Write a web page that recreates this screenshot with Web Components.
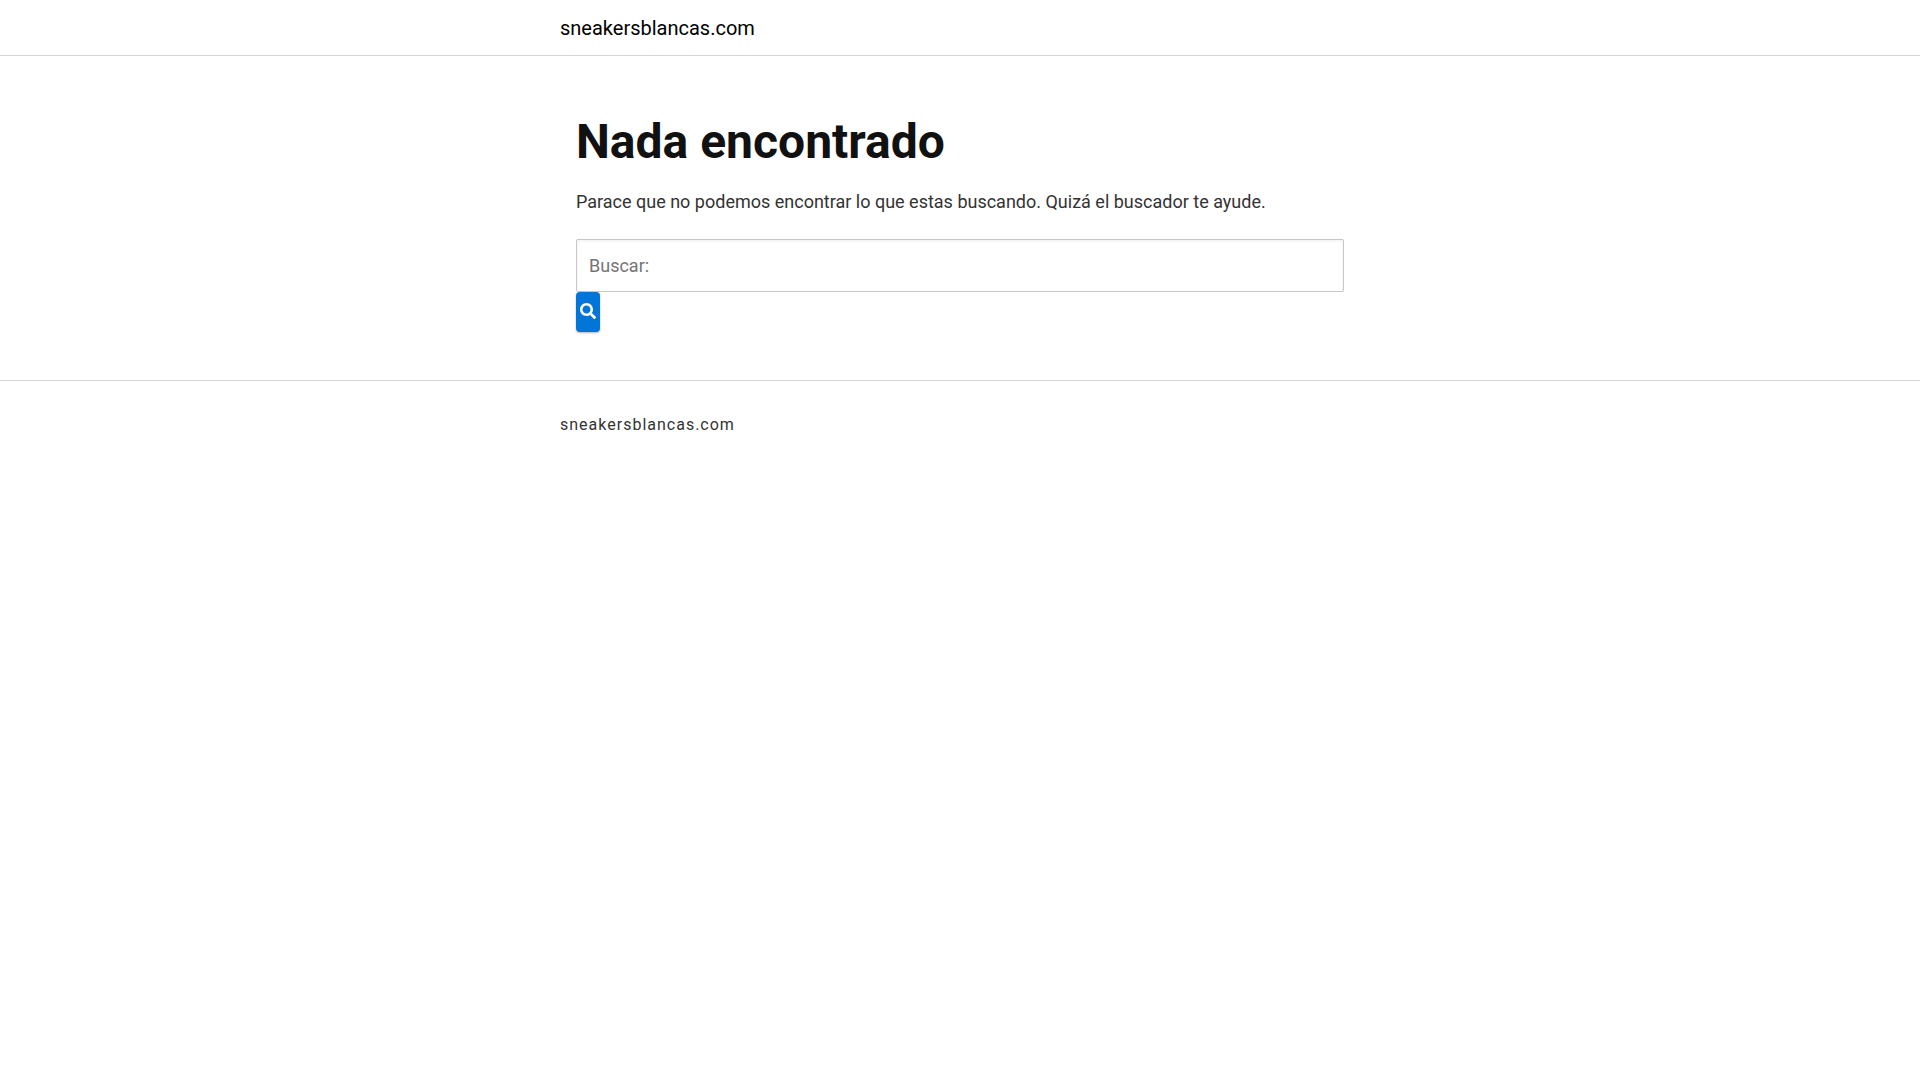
<!DOCTYPE html>
<html lang="es">
<head>
<meta charset="utf-8">
<meta name="viewport" content="width=device-width, initial-scale=1">
<title>sneakersblancas.com</title>
<style>
body { margin: 0; background: #fff; color: #333; font: 18px/27px Roboto, sans-serif; }
</style>
</head>
<body>
<site-header>sneakersblancas.com</site-header>
<not-found-content>
  <span slot="title">Nada encontrado</span>
  <span slot="message">Parace que no podemos encontrar lo que estas buscando. Quizá el buscador te ayude.</span>
  <search-form></search-form>
</not-found-content>
<site-footer>sneakersblancas.com</site-footer>

<script>
const define = (name, html) => customElements.define(name, class extends HTMLElement {
  constructor() {
    super();
    const template = document.createElement('template');
    template.innerHTML = html;
    this.attachShadow({ mode: 'open' }).append(template.content.cloneNode(true));
  }
});

define('site-header', `
<style>
  :host { display: block; border-bottom: 1px solid #d5d5d5; }
  header { max-width: 800px; margin: 0 auto; padding: 14px 0 13px; }
  a { display: inline-block; color: #000; font-size: 20px; line-height: 28px; text-decoration: none; vertical-align: top; }
</style>
<header><a href="#"><slot></slot></a></header>`);

define('not-found-content', `
<style>
  :host { display: block; }
  main { box-sizing: border-box; max-width: 800px; margin: 0 auto; padding: 56px 16px 48px; }
  h1 { margin: 0 0 16px; color: #111; font-size: 48px; line-height: 60px; font-weight: 700; }
  p { margin: 0 0 24px; }
</style>
<main>
  <h1><slot name="title"></slot></h1>
  <p><slot name="message"></slot></p>
  <slot></slot>
</main>`);

define('search-form', `
<style>
  :host { display: block; }
  form { display: flex; flex-direction: column; align-items: flex-start; margin: 0; }
  input { box-sizing: border-box; width: 100%; height: 53px; margin: 0; padding: 0 12px; border: 1px solid #c7c7c7; border-radius: 2px; background: #fff; color: #333; font: inherit; box-shadow: inset 0 1px 3px #eee; outline: 0; appearance: none; }
  input::placeholder { color: #757575; opacity: 1; }
  button { display: flex; justify-content: center; box-sizing: border-box; width: 24px; height: 40px; margin: 0; padding: 11px 0 0; border: 0; border-radius: 4px; background: #0275d8; color: #fff; box-shadow: 0 1px 2px rgba(0, 0, 0, .3); cursor: pointer; }
  svg { display: block; width: 16px; height: 16px; fill: currentColor; }
</style>
<form role="search">
  <input type="search" placeholder="Buscar:" aria-label="Buscar:">
  <button type="submit" aria-label="Buscar">
    <svg viewBox="0 0 512 512" aria-hidden="true"><path d="M505 442.700 405.300 343c-4.500-4.500-10.600-7-17-7H372c27.600-35.300 44-79.700 44-128C416 93.100 322.900 0 208 0S0 93.100 0 208s93.100 208 208 208c48.300 0 92.700-16.400 128-44v16.300c0 6.400 2.500 12.500 7 17l99.700 99.700c9.400 9.400 24.600 9.400 33.900 0l28.300-28.300c9.400-9.400 9.400-24.600.1-34zM208 336c-70.700 0-128-57.200-128-128 0-70.700 57.200-128 128-128 70.700 0 128 57.200 128 128 0 70.700-57.200 128-128 128z"/></svg>
  </button>
</form>`);

define('site-footer', `
<style>
  :host { display: block; border-top: 1px solid #d5d5d5; }
  footer { max-width: 800px; margin: 0 auto; padding: 32px 0; font-size: 16px; line-height: 24px; letter-spacing: 1px; }
</style>
<footer><slot></slot></footer>`);
</script>
</body>
</html>
